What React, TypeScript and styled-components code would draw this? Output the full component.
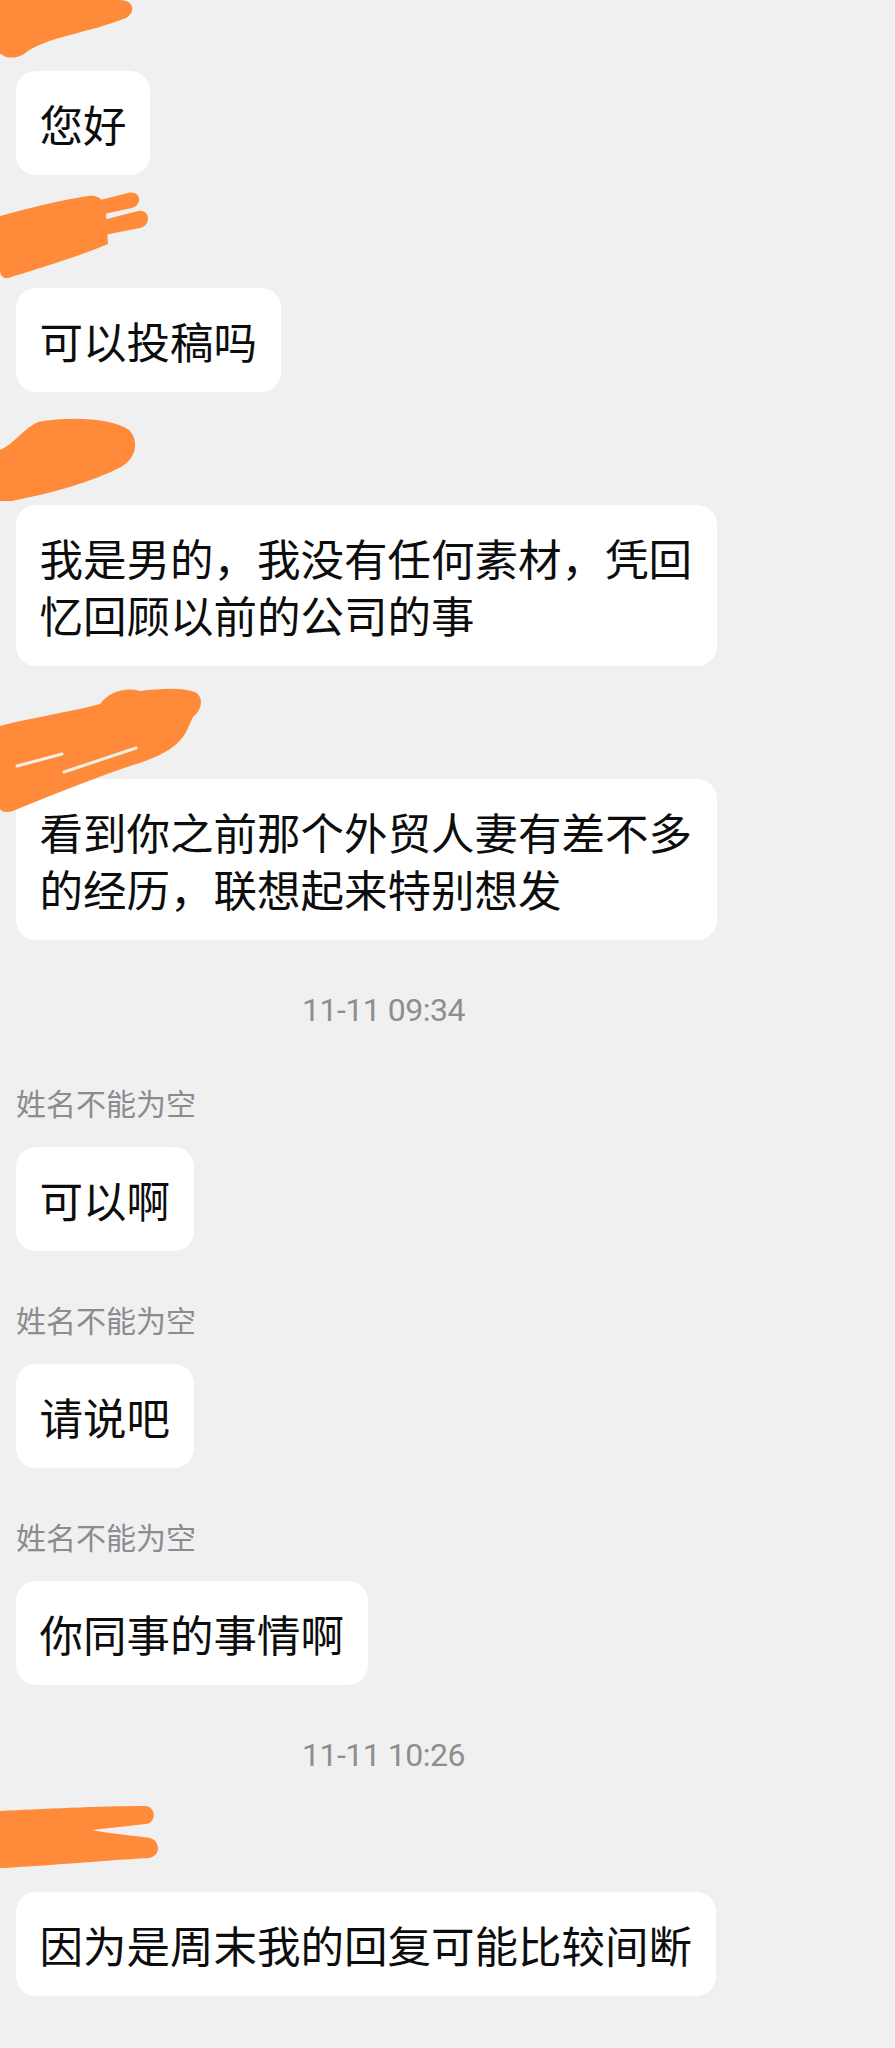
import React from "react";
import styled, { createGlobalStyle } from "styled-components";

const GlobalStyle = createGlobalStyle`
  html, body {
    margin: 0;
    padding: 0;
    background: #f0f0f0;
  }
  body {
    font-family: "Noto Sans CJK SC", "Noto Sans", sans-serif;
  }
`;

const Page = styled.div`
  display: flex;
  flex-direction: column;
  align-items: flex-start;
  min-height: 2048px;
  box-sizing: border-box;
  padding: 6px 0 40px 16px;
  background: #f0f0f0;
  overflow: hidden;
`;

const MessageGroup = styled.div`
  display: flex;
  flex-direction: column;
  align-items: flex-start;
  margin-top: 48px;
  &:first-child {
    margin-top: 0;
  }
`;

const SenderName = styled.div`
  position: relative;
  height: 40px;
  line-height: 40px;
  margin-bottom: 25px;
  font-size: 30px;
  color: #8b8b90;
  font-family: "Noto Sans CJK SC", sans-serif;
  white-space: nowrap;
`;

const Bubble = styled.div`
  box-sizing: border-box;
  max-width: 701px;
  padding: 23.5px 23.5px;
  border-radius: 20px;
  background: #ffffff;
  color: #0d0d0d;
  font-size: 43.5px;
  line-height: 57px;
  font-family: "Noto Sans CJK SC", sans-serif;
  word-break: break-all;
`;

const TimeStamp = styled.div`
  align-self: stretch;
  margin: 50px 144px 4px 0;
  height: 40px;
  line-height: 40px;
  text-align: center;
  font-family: Roboto, "Liberation Sans", sans-serif;
  font-size: 32px;
  letter-spacing: -0.5px;
  color: #8e8e8e;
`;

const RedactionSvg = styled.svg<{ $top: number }>`
  position: absolute;
  left: -16px;
  top: ${(p) => p.$top}px;
  overflow: visible;
  pointer-events: none;
`;

type Scribble = {
  y0: number;
  w: number;
  h: number;
  fills: string[];
  streaks?: string[];
};

const ORANGE = "#ff8b3a";

const scribbles: Record<string, Scribble> = {
  s1: {
    y0: 0,
    w: 136,
    h: 60,
    fills: [
      "M0 0 L120 0 C134 0 136 12 126 18 C106 26 88 30 70 35 C50 40 34 46 24 54 C14 60 2 58 0 52 Z",
      "M0 24 C20 20 40 22 50 30 L20 52 L0 54 Z",
    ],
  },
  s2: {
    y0: 188,
    w: 150,
    h: 92,
    fills: [
      "M0 216 C30 208 60 200 88 196 C102 194 108 206 106 214 L108 244 C80 256 40 268 8 278 C2 279 0 274 0 270 Z",
      "M84 204 L128 193 C141 190 143 205 132 208 L90 217 Z",
      "M88 224 L138 211 C151 209 151 226 140 228 L94 237 Z",
    ],
  },
  s3: {
    y0: 418,
    w: 140,
    h: 84,
    fills: [
      "M38 422 C70 416 112 418 129 430 C139 440 137 458 121 467 C92 482 52 493 12 501 L0 501 L0 450 C14 444 24 428 38 422 Z",
    ],
  },
  s4: {
    y0: 688,
    w: 206,
    h: 126,
    fills: [
      "M0 726 C30 718 70 712 100 704 C110 691 126 687 140 691 C160 689 180 687 195 692 C205 698 201 711 193 717 L188 728 C180 747 160 757 130 766 C100 776 60 792 20 808 C10 813 2 813 0 809 Z",
    ],
    streaks: ["M17 766 L62 754", "M64 772 L136 748"],
  },
  s5: {
    y0: 1804,
    w: 162,
    h: 66,
    fills: [
      "M0 1811 C40 1809 100 1806 145 1806 C156 1806 157 1823 146 1824 L92 1830 C112 1834 138 1836 150 1838 C161 1841 161 1857 148 1858 C100 1861 40 1866 5 1868 L0 1868 Z",
    ],
  },
};

function Redaction({ id, nameTop }: { id: string; nameTop: number }) {
  const s = scribbles[id];
  return (
    <RedactionSvg
      $top={s.y0 - nameTop}
      width={s.w}
      height={s.h}
      viewBox={`0 ${s.y0} ${s.w} ${s.h}`}
    >
      {s.fills.map((d, i) => (
        <path key={i} d={d} fill={ORANGE} />
      ))}
      {s.streaks?.map((d, i) => (
        <path
          key={`s${i}`}
          d={d}
          stroke="#f3ede8"
          strokeWidth={3}
          strokeLinecap="round"
          fill="none"
        />
      ))}
    </RedactionSvg>
  );
}

type Item =
  | { kind: "msg"; name?: string; redact?: string; nameTop?: number; text: string }
  | { kind: "time"; text: string };

const items: Item[] = [
  { kind: "msg", redact: "s1", nameTop: 6, text: "您好" },
  { kind: "msg", redact: "s2", nameTop: 223, text: "可以投稿吗" },
  {
    kind: "msg",
    redact: "s3",
    nameTop: 440,
    text: "我是男的，我没有任何素材，凭回忆回顾以前的公司的事",
  },
  {
    kind: "msg",
    redact: "s4",
    nameTop: 714,
    text: "看到你之前那个外贸人妻有差不多的经历，联想起来特别想发",
  },
  { kind: "time", text: "11-11 09:34" },
  { kind: "msg", name: "姓名不能为空", text: "可以啊" },
  { kind: "msg", name: "姓名不能为空", text: "请说吧" },
  { kind: "msg", name: "姓名不能为空", text: "你同事的事情啊" },
  { kind: "time", text: "11-11 10:26" },
  {
    kind: "msg",
    redact: "s5",
    nameTop: 1827,
    text: "因为是周末我的回复可能比较间断",
  },
];

export default function App() {
  return (
    <>
      <GlobalStyle />
      <Page>
        {items.map((it, i) =>
          it.kind === "time" ? (
            <TimeStamp key={i}>{it.text}</TimeStamp>
          ) : (
            <MessageGroup key={i}>
              <SenderName>
                {it.name}
                {it.redact && <Redaction id={it.redact} nameTop={it.nameTop ?? 0} />}
              </SenderName>
              <Bubble>{it.text}</Bubble>
            </MessageGroup>
          )
        )}
      </Page>
    </>
  );
}
